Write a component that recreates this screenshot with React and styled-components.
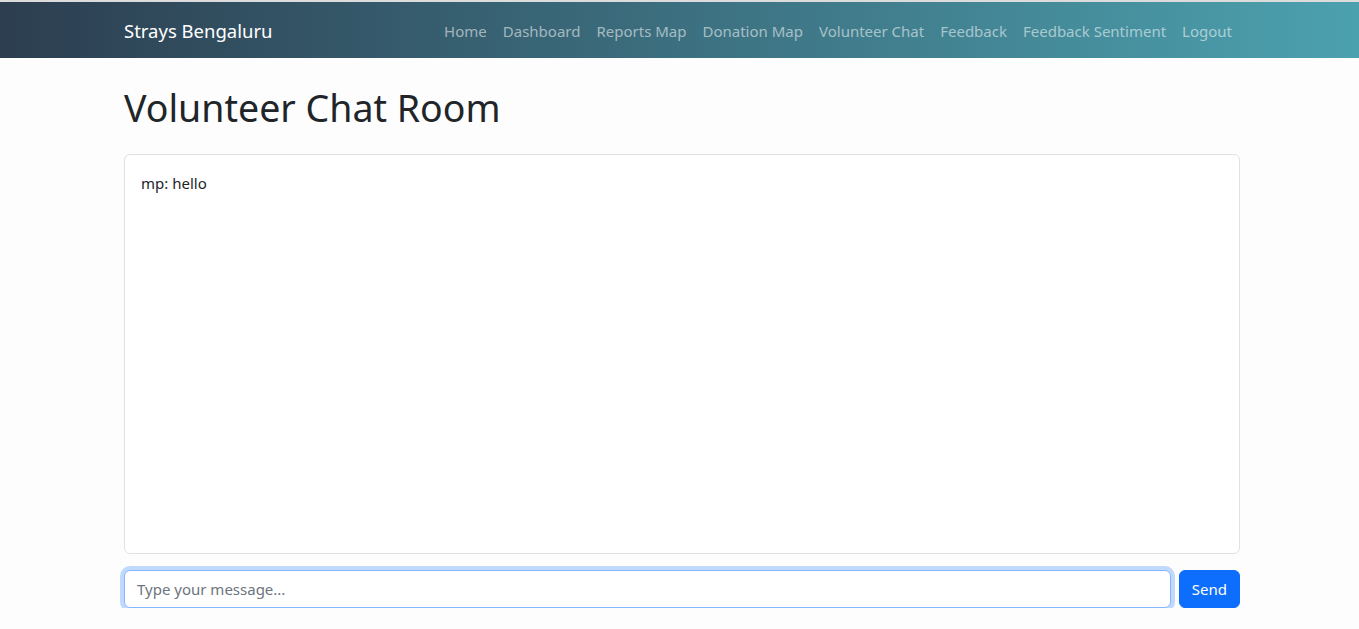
import React, { useState } from "react";
import styled, { createGlobalStyle } from "styled-components";

const Global = createGlobalStyle`
  html, body { margin: 0; padding: 0; }
  body {
    background: #fdfdfd;
    font-family: "Noto Sans", "Open Sans", sans-serif;
    font-size: 16px;
    line-height: 1.5;
    color: #212529;
    border-top: 2px solid #dcdcdc;
  }
  * { box-sizing: border-box; }
`;

const Navbar = styled.nav`
  background: linear-gradient(to right, #2c3e50, #4ca1af);
  padding: 9px 0 7px;
`;

const Container = styled.div`
  width: 1140px;
  margin: 0 auto;
  padding: 0 12px;
  position: relative;
  left: 2.5px;
`;

const NavInner = styled(Container)`
  display: flex;
  align-items: center;
  justify-content: space-between;
`;

const Brand = styled.a`
  color: #fff;
  font-size: 18.5px;
  line-height: 30px;
  padding: 5px 0;
  text-decoration: none;
`;

const NavList = styled.ul`
  display: flex;
  list-style: none;
  margin: 0;
  padding: 0;
`;

const NavLink = styled.a`
  display: block;
  padding: 8px 8px;
  font-size: 15px;
  line-height: 24px;
  color: rgba(255, 255, 255, 0.55);
  text-decoration: none;
`;

const Main = styled(Container)`
  padding-top: 27px;
`;

const Title = styled.h1`
  font-size: 37.5px;
  font-weight: 400;
  line-height: 45px;
  margin: 0 0 24px;
`;

const ChatBox = styled.div`
  height: 400px;
  background: #fff;
  border: 1px solid #dee2e6;
  border-radius: 6px;
  padding: 17px 16px 16px;
  overflow-y: auto;
  margin-bottom: 16px;
`;

const Message = styled.div`
  font-size: 15px;
  margin-bottom: 8px;
`;

const InputRow = styled.form`
  display: flex;
  gap: 8px;
`;

const Input = styled.input`
  flex: 1;
  height: 38px;
  padding: 6px 12px;
  font: inherit;
  font-size: 15px;
  color: #212529;
  background: #fff;
  border: 1px solid #86b7fe;
  border-radius: 6px;
  outline: none;
  box-shadow: 0 0 0 4px rgba(13, 110, 253, 0.25);
  &::placeholder { color: #6c757d; }
`;

const Button = styled.button`
  height: 38px;
  padding: 6px 12px;
  font: inherit;
  font-size: 15px;
  color: #fff;
  background: #0d6efd;
  border: 1px solid #0d6efd;
  border-radius: 6px;
  cursor: pointer;
`;

const links = ["Home", "Dashboard", "Reports Map", "Donation Map", "Volunteer Chat", "Feedback", "Feedback Sentiment", "Logout"];

export default function App() {
  const [text, setText] = useState("");
  return (
    <>
      <Global />
      <Navbar>
        <NavInner>
          <Brand href="#">Strays Bengaluru</Brand>
          <NavList>
            {links.map((l) => (
              <li key={l}><NavLink href="#">{l}</NavLink></li>
            ))}
          </NavList>
        </NavInner>
      </Navbar>
      <Main>
        <Title>Volunteer Chat Room</Title>
        <ChatBox>
          <Message>mp: hello</Message>
        </ChatBox>
        <InputRow onSubmit={(e) => e.preventDefault()}>
          <Input placeholder="Type your message..." value={text} onChange={(e) => setText(e.target.value)} />
          <Button type="submit">Send</Button>
        </InputRow>
      </Main>
    </>
  );
}
